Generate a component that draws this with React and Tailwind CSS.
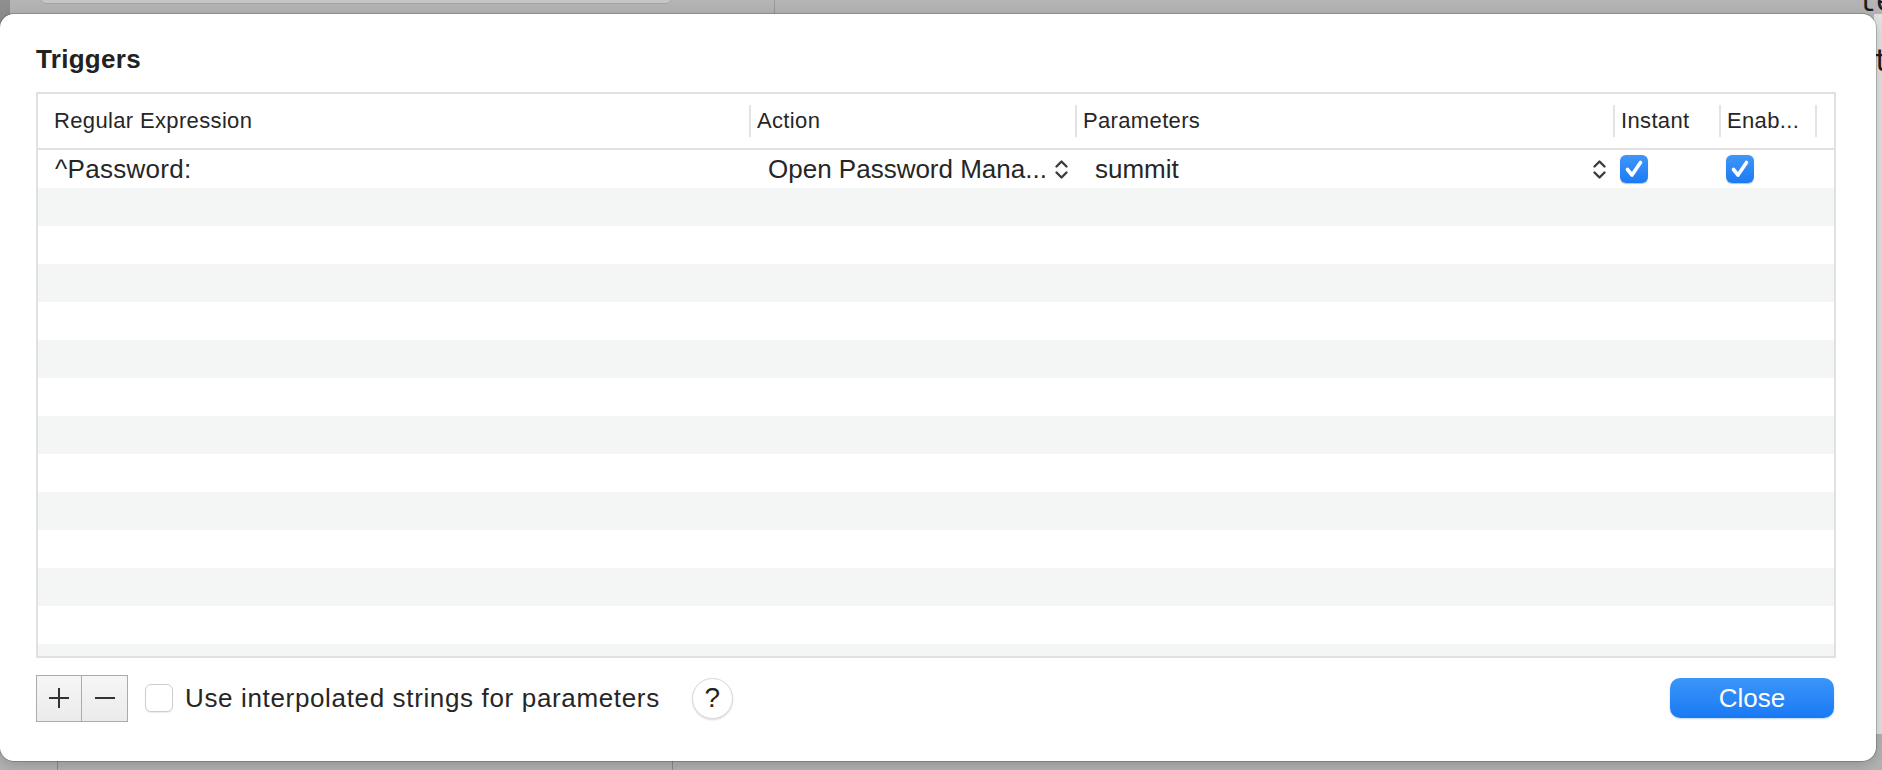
import React from 'react';

const COLS = 'grid grid-cols-[711px_326px_538px_106px_96px_1fr]';

function Chevrons() {
  return (
    <svg width="15" height="21" viewBox="0 0 15 21" fill="none" stroke="#3d3d3d" strokeWidth="2.4" strokeLinecap="round" strokeLinejoin="round">
      <path d="M2.5 7.5 L7.5 2.5 L12.5 7.5" />
      <path d="M2.5 13.5 L7.5 18.5 L12.5 13.5" />
    </svg>
  );
}

function CheckedBox() {
  return (
    <div className="w-[28px] h-[28px] rounded-[6px] bg-linear-to-b from-[#3f96f8] to-[#1a7bf5] shadow-[0_0.5px_1px_rgba(0,0,0,0.25)]">
      <svg width="28" height="28" viewBox="0 0 28 28" fill="none" stroke="white" strokeWidth="3.6" strokeLinecap="round" strokeLinejoin="round">
        <path d="M7.5 14.5 L12 20 L20.5 7.5" />
      </svg>
    </div>
  );
}

function Head({ children, first }) {
  return (
    <div className="flex items-center min-w-0">
      {!first && <div className="w-[2px] h-[32px] bg-[#e3e3e3] shrink-0" />}
      <span className={`${first ? 'pl-4' : 'pl-[6px]'} text-[22px] leading-none tracking-[0.35px] text-[#262626] whitespace-nowrap`}>
        {children}
      </span>
    </div>
  );
}

export default function App() {
  const rows = Array.from({ length: 14 });

  return (
    <div className="relative w-[1882px] h-[770px] overflow-hidden bg-[#b4b4b4] font-['Liberation_Sans',Arial,sans-serif] text-[#262626]">
      {/* window behind the sheet */}
      <div className="absolute left-[40px] top-[-12px] w-[632px] h-[16px] rounded-[6px] bg-[#c6c6c6] border border-[#a3a3a3]" />
      <div className="absolute left-[774px] top-0 w-px h-[14px] bg-[#9a9a9a]" />
      <div className="absolute left-0 top-0 w-[10px] h-[40px] bg-[#8e8e8e]" />
      <div className="absolute right-0 top-[14px] w-[8px] h-[720px] bg-[#e4e4e4]" />
      <div className="absolute left-[1858px] top-[-14px] font-['DejaVu_Sans_Mono',monospace] text-[30px] leading-[30px] text-[#1e1e1e]">te</div>
      <div className="absolute left-[1872px] top-[46px] font-['DejaVu_Sans_Mono',monospace] text-[30px] leading-[30px] text-[#1e1e1e]">t</div>
      <div className="absolute left-[57px] top-[761px] w-px h-[9px] bg-[#8c8c8c]" />
      <div className="absolute left-[672px] top-[761px] w-px h-[9px] bg-[#8c8c8c]" />

      {/* sheet */}
      <div className="absolute left-0 top-[14px] w-[1876px] h-[747px] bg-white rounded-[14px] shadow-[0_0_0_1px_rgba(0,0,0,0.18),0_4px_16px_rgba(0,0,0,0.2)] flex flex-col pl-[36px] pr-[40px] pt-[30px]">
        <h1 className="text-[26px] leading-[30px] font-bold tracking-[0.3px] text-[#222]">Triggers</h1>

        <div className="mt-[18px] h-[566px] border-2 border-[#e1e1e1] flex flex-col overflow-hidden">
          <div className={`${COLS} h-[56px] shrink-0 border-b-2 border-[#e1e1e1]`}>
            <Head first>Regular Expression</Head>
            <Head>Action</Head>
            <Head>Parameters</Head>
            <Head>Instant</Head>
            <Head>Enab...</Head>
            <div className="flex items-center">
              <div className="w-[2px] h-[32px] bg-[#e3e3e3]" />
            </div>
          </div>

          <div className="flex-1 flex flex-col overflow-hidden">
            {rows.map((_, i) => (
              <div key={i} className={`${COLS} h-[38px] shrink-0 ${i % 2 ? 'bg-[#f4f5f5]' : 'bg-white'}`}>
                {i === 0 && (
                  <>
                    <div className="flex items-center pl-[17px] text-[26px] leading-none tracking-[0.3px]">^Password:</div>
                    <div className="flex items-center justify-between pl-[19px] pr-[6px] text-[26px] leading-none">
                      <span className="whitespace-nowrap">Open Password Mana...</span>
                      <Chevrons />
                    </div>
                    <div className="flex items-center justify-between pl-[20px] pr-[6px] text-[26px] leading-none">
                      <span>summit</span>
                      <Chevrons />
                    </div>
                    <div className="flex items-center pl-[7px]">
                      <CheckedBox />
                    </div>
                    <div className="flex items-center pl-[7px]">
                      <CheckedBox />
                    </div>
                    <div />
                  </>
                )}
              </div>
            ))}
          </div>
        </div>

        <div className="mt-[16px] h-[48px] flex items-center">
          <div className="flex h-[47px] border-[1.5px] border-[#ababab] bg-linear-to-b from-[#f6f6f6] to-[#ebebeb]">
            <button className="w-[45px] flex items-center justify-center border-r-[1.5px] border-[#ababab]">
              <svg width="22" height="22" viewBox="0 0 22 22" stroke="#333" strokeWidth="2">
                <path d="M11 1 V21 M1 11 H21" />
              </svg>
            </button>
            <button className="w-[45px] flex items-center justify-center">
              <svg width="22" height="22" viewBox="0 0 22 22" stroke="#333" strokeWidth="2">
                <path d="M1 11 H21" />
              </svg>
            </button>
          </div>

          <div className="ml-[17px] w-[28px] h-[28px] rounded-[6px] bg-white border border-[#cdcdcd] shadow-[0_1px_1px_rgba(0,0,0,0.08)]" />
          <span className="ml-[12px] text-[26px] leading-none tracking-[0.65px] whitespace-nowrap">Use interpolated strings for parameters</span>

          <div className="ml-[32px] w-[41px] h-[41px] rounded-full bg-white border border-[#d9d9d9] shadow-[0_1px_2px_rgba(0,0,0,0.15)] flex items-center justify-center">
            <span className="text-[28px] leading-none text-[#222]">?</span>
          </div>

          <button className="ml-auto mr-[2px] w-[164px] h-[40px] rounded-[10px] bg-linear-to-b from-[#3a96f8] to-[#1979f5] shadow-[0_1px_2px_rgba(0,90,220,0.25)] text-white text-[26px] leading-none">
            Close
          </button>
        </div>
      </div>
    </div>
  );
}
